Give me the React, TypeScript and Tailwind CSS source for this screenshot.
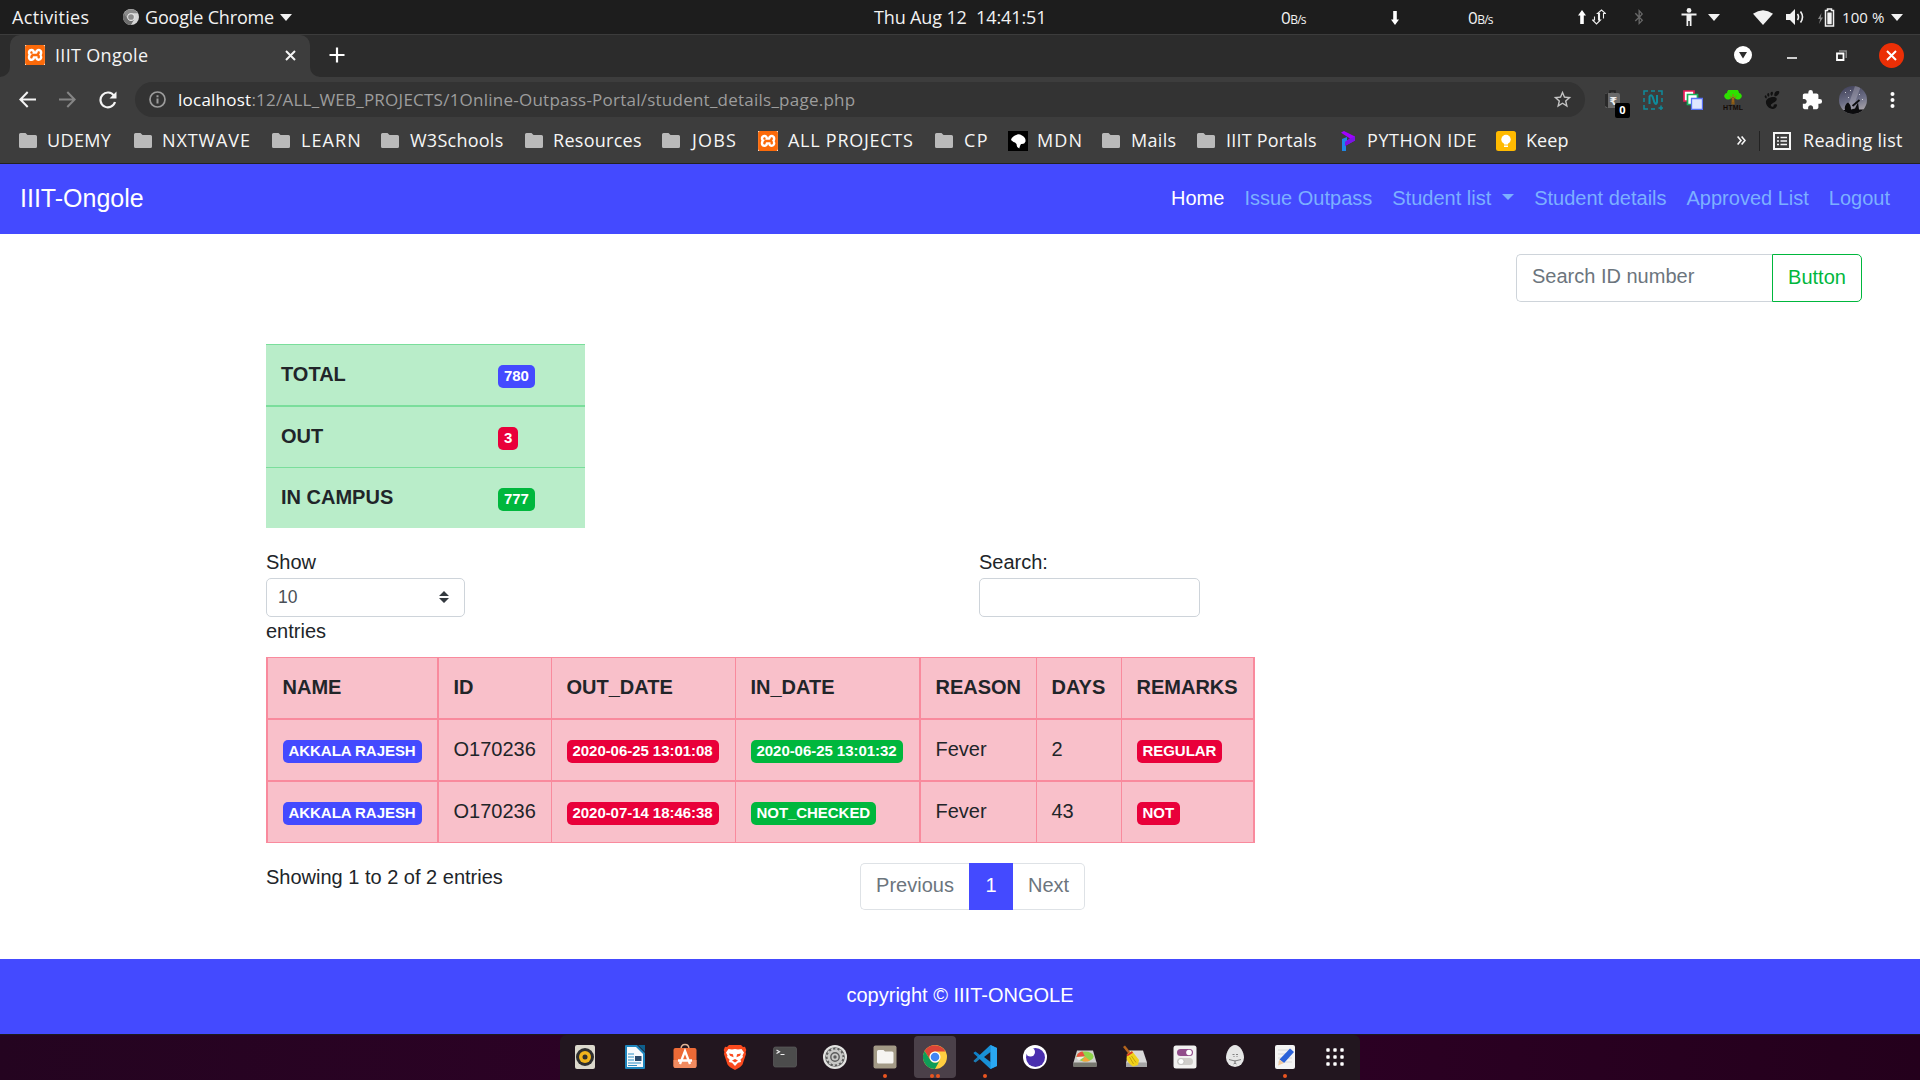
import React from "react";
import { SiGnome, SiXampp } from "react-icons/si";
import { FaBluetoothB } from "react-icons/fa";
import { MdExtension, MdStarBorder } from "react-icons/md";

const UI = "font-['Open_Sans','Noto_Sans',sans-serif]";

function Caret({ className = "" }: { className?: string }) {
  return (
    <svg className={`h-[7px] w-3 shrink-0 ${className}`} viewBox="0 0 12 7" fill="#f2f2f2">
      <path d="M0 0h12L6 7z" />
    </svg>
  );
}

function ChromeLogo({ className, mono = false }: { className: string; mono?: boolean }) {
  const [r, g, y, b, w] = mono
    ? ["#8b8b8b", "#6e6e6e", "#d6d6d6", "#8a8a8a", "#e8e8e8"]
    : ["#db4437", "#0f9d58", "#ffcd40", "#4285f4", "#fff"];
  return (
    <svg className={className} viewBox="0 0 24 24">
      <circle cx="12" cy="12" r="12" fill={y} />
      <path d="M1.6 6A12 12 0 0 1 22.4 6.5H12a5.5 5.5 0 0 0-4.8 8.2z" fill={r} />
      <path d="M1.6 6A12 12 0 0 0 12 24l4.8-8.7A5.5 5.5 0 0 1 7.2 14.7z" fill={g} />
      <circle cx="12" cy="12" r="5.5" fill={w} />
      <circle cx="12" cy="12" r="4.3" fill={b} />
    </svg>
  );
}

function Xampp({ className = "" }: { className?: string }) {
  return (
    <span className={`flex size-5 shrink-0 items-center justify-center bg-white ${className}`}>
      <SiXampp className="size-5 text-[#fb6a0a]" />
    </span>
  );
}

function BigArrow({ up = false }: { up?: boolean }) {
  return (
    <svg className={`h-[14px] w-2 shrink-0 ${up ? "rotate-180" : ""}`} viewBox="0 0 8 14" fill="#fff">
      <path d="M2.2 0h3.6v8.5H8L4 14 0 8.5h2.2z" />
    </svg>
  );
}

function Rate() {
  return (
    <span className="flex w-[110px] shrink-0 items-baseline pt-[2px] text-[#f2f2f2]">
      <span className="text-[17px] tracking-[-0.5px]">0</span>
      <span className="text-[12px] tracking-[-0.8px]">B/s</span>
    </span>
  );
}

function TopBar() {
  return (
    <div className="flex h-[34px] items-center bg-[#1d1d1d] pl-3 text-[18px] text-[#f2f2f2]">
      <span className="w-[111px] tracking-[0.33px]">Activities</span>
      <ChromeLogo mono className="mr-[6px] size-4" />
      <span className="w-[135px] tracking-[-0.17px]">Google Chrome</span>
      <Caret />
      <span className="ml-[582px] w-[102px] tracking-[-0.14px]">Thu Aug 12</span>
      <span className="w-[305px] tracking-[-0.1px]">14:41:51</span>
      <Rate />
      <div className="flex w-[77px] pt-[2px]">
        <BigArrow />
      </div>
      <Rate />
      <BigArrow up />
      <svg className="ml-[6px] h-4 w-[14px]" viewBox="0 0 14 16" fill="none" stroke="#eee" strokeWidth="1.1">
        <path d="M6.500 4.500v6.500h2L4.500 15 .5 11h2V7.500M7.500 11V4.500h-2L9.500 1l4 3.500h-2v5" />
      </svg>
      <FaBluetoothB className="ml-[25px] size-4 text-[#686868]" />
      <svg className="ml-[34px] h-[18px] w-4" viewBox="0 0 16 18" fill="#f2f2f2">
        <circle cx="8" cy="2.4" r="2.4" />
        <path d="M.5 5.5h15v2h-5V18H8.8v-5H7.2v5H5.5V7.500h-5z" />
      </svg>
      <Caret className="ml-[11px]" />
      <svg className="ml-[33px] h-[15px] w-5" viewBox="0 0 20 15" fill="#f2f2f2">
        <path d="M0 3.8Q10-3.500 20 3.800L10 15z" />
      </svg>
      <svg className="ml-[13px] h-[18px] w-[19px]" viewBox="0 0 19 18" fill="#f2f2f2">
        <path d="M0 6h4l5-5v16l-5-5H0z" />
        <path d="M11.5 6q2 3 0 6M14.5 3.5q4 5.500 0 11" fill="none" stroke="#f2f2f2" strokeWidth="1.6" />
      </svg>
      <svg className="ml-[13px] h-[19px] w-[18px]" viewBox="0 0 18 19">
        <path d="M3.500 5 0 11h2.200L1 16l4-6.500H2.800z" fill="#8a8a8a" />
        <path d="M7.500 2.500h2V1h4v1.500h2V18h-8z" fill="none" stroke="#f2f2f2" strokeWidth="1.500" />
        <path d="M9.300 4.500h4.400v11.800H9.300z" fill="#f2f2f2" />
      </svg>
      <span className="ml-[6px] w-[49px] pt-px text-[15px] whitespace-nowrap tracking-[0.1px]">100 %</span>
      <Caret />
    </div>
  );
}

function TabStrip() {
  return (
    <div className="flex h-[43px] items-center border-t border-[#3c3c3c] bg-[#2c2c2c] pr-4">
      <div className="h-full w-[10px] bg-[#3d3d3d]">
        <div className="h-full w-full rounded-br-[10px] bg-[#2c2c2c]" />
      </div>
      <div className="flex h-full w-[300px] items-center rounded-t-[10px] bg-[#3d3d3d] pb-[2px] pl-[15px]">
        <Xampp />
        <span className="ml-[10px] w-[230px] text-[18px] tracking-[0.31px] text-[#f4f4f4]">IIIT Ongole</span>
        <svg className="size-[11px]" viewBox="0 0 11 11" stroke="#f4f4f4" strokeWidth="2">
          <path d="M1 1l9 9M10 1l-9 9" />
        </svg>
      </div>
      <div className="h-full w-[10px] bg-[#3d3d3d]">
        <div className="h-full w-full rounded-bl-[10px] bg-[#2c2c2c]" />
      </div>
      <svg className="mb-[2px] ml-[9px] size-4" viewBox="0 0 16 16" stroke="#fff" strokeWidth="2.200">
        <path d="M8 .5v15M.5 8h15" />
      </svg>
      <div className="mb-[2px] ml-auto flex items-center">
        <svg className="size-[18px]" viewBox="0 0 18 18">
          <circle cx="9" cy="9" r="9" fill="#fff" />
          <path d="M5 6h8l-4 6.500z" fill="#2c2c2c" />
        </svg>
        <div className="mt-[6px] ml-[35px] h-[2px] w-[10px] bg-[#cfcfcf]" />
        <svg className="ml-[39px] size-[11px]" viewBox="0 0 11 11" fill="none">
          <path d="M3 1h7.200v7" stroke="#8c8c8c" strokeWidth="1.400" />
          <path d="M1 3.500h6.500V10H1z" stroke="#fff" strokeWidth="1.800" />
        </svg>
        <div className="ml-[32px] flex size-[25px] items-center justify-center rounded-full bg-[#eb2f06]">
          <svg className="size-[11px]" viewBox="0 0 11 11" stroke="#fff" strokeWidth="2">
            <path d="M1 1l9 9M10 1l-9 9" />
          </svg>
        </div>
      </div>
    </div>
  );
}

function Extensions() {
  return (
    <div className="ml-[18px] flex items-center">
      <div className="relative mr-[20px]">
        <svg className="size-5" viewBox="0 0 20 20">
          <path d="M7 3V1h5v2" stroke="#222" fill="none" strokeWidth="1.500" />
          <rect x="2" y="3" width="15" height="15" rx="2" fill="#6a6a6a" />
          <path d="M2 4l3-1v15l-3-2z" fill="#2a2a2a" />
          <text x="6.500" y="14.500" fontSize="11" fontWeight="700" fill="#eee" fontFamily="DejaVu Sans">₹</text>
        </svg>
        <span className="absolute top-[13px] left-3 flex h-[15px] w-[15px] items-center justify-center rounded-[2px] bg-black text-[11px] font-bold text-white">
          0
        </span>
      </div>
      <svg className="mr-[20px] size-5" viewBox="0 0 20 20" fill="none" stroke="#0f8b9b">
        <path d="M1 5V1h4M8 1h4M15 1h4v4M19 8v4M1 8v4M1 15v4h4M8 19h4M15.500 18h5M18 15.500v5" strokeWidth="1.500" />
        <path d="M6.500 14V6.500q1.500-2.500 3 0l2 6q1.500 3 2.500 0V5" strokeWidth="2" />
      </svg>
      <svg className="mr-[20px] size-5" viewBox="0 0 20 20" fill="#fff">
        <path d="M1 1h10v10H1z" stroke="#ee1c5a" strokeWidth="1.700" />
        <path d="M4.500 4.500h10v10h-10z" stroke="#16b45c" strokeWidth="1.700" />
        <path d="M8.500 8.500h11v11h-11z" fill="#dfe6ff" stroke="#5872f5" strokeWidth="1.300" />
      </svg>
      <svg className="mr-[20px] size-5" viewBox="0 0 20 20">
        <path d="M8.800 8h2.400l.5 6.500H8.300z" fill="#8a5a14" />
        <path d="M2 8a3 3 0 0 1 2-5 6 5 0 0 1 12 0 3 3 0 0 1 2 5q-2 2.500-5 1l-3-2-3 2q-3 1.500-5-1z" fill="#2de000" />
        <path d="M10 12V4M10 9 6.500 6M10 9l3.500-3" stroke="#a86a1a" strokeWidth="1" />
        <text x="0" y="19.500" fontSize="7" fontWeight="700" textLength="20" fill="#140b06" fontFamily="Liberation Sans">HTML</text>
      </svg>
      <SiGnome className="mr-[20px] size-[18px] text-[#111]" />
      <MdExtension className="mr-[16px] size-[22px] text-white" />
      <svg className="mr-[23px] size-7" viewBox="0 0 28 28">
        <defs>
          <linearGradient id="sky" x1="0" y1="0" x2=".3" y2="1">
            <stop offset="0" stopColor="#3c3c54" />
            <stop offset=".6" stopColor="#6c6e86" />
            <stop offset="1" stopColor="#a5a1a8" />
          </linearGradient>
          <clipPath id="face">
            <circle cx="14" cy="14" r="14" />
          </clipPath>
        </defs>
        <g clipPath="url(#face)">
          <path d="M0 0h28v28H0z" fill="url(#sky)" />
          <path d="M16 0l6 0L14 22l-5-2z" fill="#c4c0cc" opacity=".35" />
          <path d="M0 24h6q-1-5 3-7.500 3 2 3 7l4-1 3-6 1 7h8v6H0z" fill="#0b0b0d" />
          <path d="M13.500 20l7-6" stroke="#0b0b0d" strokeWidth="1.800" />
          <path d="M6 6h1v1H6zM11 4h1v1h-1zM20 8h1v1h-1zM9 11h1v1H9zM23 13h1v1h-1z" fill="#fff" opacity=".7" />
        </g>
      </svg>
      <svg className="h-4 w-[5px]" viewBox="0 0 5 16" fill="#fff">
        <circle cx="2.500" cy="2" r="2" />
        <circle cx="2.500" cy="8" r="2" />
        <circle cx="2.500" cy="14" r="2" />
      </svg>
    </div>
  );
}

function AddressRow() {
  return (
    <div className="flex h-[45px] items-center bg-[#3d3d3d] pl-[19px]">
      <svg className="size-[17px]" viewBox="0 0 17 17" fill="none" stroke="#f4f4f4" strokeWidth="2">
        <path d="M17 8.500H2M8.700 1 1.400 8.500 8.700 16" />
      </svg>
      <svg className="ml-[23px] size-[17px]" viewBox="0 0 17 17" fill="none" stroke="#858585" strokeWidth="2">
        <path d="M0 8.500h15M8.300 1l7.300 7.500L8.300 16" />
      </svg>
      <svg className="ml-[23px] size-[18px]" viewBox="0 0 18 18" fill="none" stroke="#f4f4f4" strokeWidth="2.200">
        <path d="M15 4.700A7.400 7.400 0 1 0 16 11" />
        <path d="M17.500.5v7H10.500z" fill="#f4f4f4" stroke="none" />
      </svg>
      <div className="ml-[18px] flex h-[35px] w-[1450px] items-center rounded-full bg-[#333] pr-[12px] pl-[14px]">
        <svg className="size-[17px]" viewBox="0 0 17 17" fill="none" stroke="#9c9c9c" strokeWidth="1.700">
          <circle cx="8.500" cy="8.500" r="7.500" />
          <path d="M8.500 7.500v5M8.500 4.300v1.900" strokeWidth="2" />
        </svg>
        <span className="ml-3 text-[17px] tracking-[0.24px] text-[#9d9d9d]">
          <span className="text-white">localhost</span>
          :12/ALL_WEB_PROJECTS/1Online-Outpass-Portal/student_details_page.php
        </span>
        <MdStarBorder className="ml-auto size-[21px] text-[#c4c4c4]" />
      </div>
      <Extensions />
    </div>
  );
}

function Folder() {
  return (
    <svg className="h-[15px] w-[18px]" viewBox="0 0 18 15" fill="#bababa">
      <path d="M0 1.500Q0 0 1.500 0h5l2 2H16.500Q18 2 18 3.500v10Q18 15 16.500 15h-15Q0 15 0 13.500z" />
    </svg>
  );
}

function MdnIcon() {
  return (
    <svg className="size-5" viewBox="0 0 20 20">
      <path d="M0 0h20v20H0z" fill="#000" />
      <path d="M3 9q0-2 3-4 4-3 8-.5 4 2 3.500 6-1 3-4.500 2.500-2 3.500-1.500 4.500-3-1-3-4.500Q7 11 5.500 11z" fill="#fff" />
    </svg>
  );
}

function PyIcon() {
  return (
    <svg className="h-5 w-[14px]" viewBox="0 0 14 20">
      <path d="M1 8l5-2v5l-1 1v8H1z" fill="#1e88e5" />
      <path d="M0 1.500 3 0l11 5.500v4L4 15v-4l5-3.500L2 3z" fill="#a100ff" />
      <path d="M9 7.500l5-2v4L4 15v-4z" fill="#7a14e8" />
    </svg>
  );
}

function KeepIcon() {
  return (
    <svg className="size-5" viewBox="0 0 20 20">
      <rect width="20" height="20" rx="2.500" fill="#ffba00" />
      <circle cx="10" cy="8.500" r="4.700" fill="#fff" />
      <path d="M8 12h4v1.500H8zM8 14.500h4V16H8z" fill="#fff" />
    </svg>
  );
}

const BOOKMARKS: { label: string; item: string; text: string; icon?: React.ReactNode }[] = [
  { label: "UDEMY", item: "w-[115px]", text: "ml-[10px] tracking-[0.35px]" },
  { label: "NXTWAVE", item: "w-[138px]", text: "ml-[10px] tracking-[0.9px]" },
  { label: "LEARN", item: "w-[109px]", text: "ml-[11px] tracking-[1.1px]" },
  { label: "W3Schools", item: "w-[144px]", text: "ml-[11px] tracking-[0.25px]" },
  { label: "Resources", item: "w-[137px]", text: "ml-[10px] tracking-[0.28px]" },
  { label: "JOBS", item: "w-[96px]", text: "ml-[12px] tracking-[1.18px]" },
  { label: "ALL PROJECTS", item: "w-[177px]", text: "ml-[10px] tracking-[0.74px]", icon: <Xampp /> },
  { label: "CP", item: "w-[73px]", text: "ml-[11px] tracking-[1.5px]" },
  { label: "MDN", item: "w-[94px]", text: "ml-[9px] tracking-[1.13px]", icon: <MdnIcon /> },
  { label: "Mails", item: "w-[95px]", text: "ml-[11px] tracking-[0.31px]" },
  { label: "IIIT Portals", item: "w-[144px]", text: "ml-[11px] tracking-[0.21px]" },
  { label: "PYTHON IDE", item: "w-[155px]", text: "ml-3 tracking-[0.57px]", icon: <PyIcon /> },
  { label: "Keep", item: "w-[241px]", text: "ml-[10px] tracking-[0.09px]", icon: <KeepIcon /> },
];

function BookmarksBar() {
  return (
    <div className="flex h-[42px] items-center border-b border-[#222] bg-[#3d3d3d] pb-1 pl-[19px] text-[18px] text-[#f6f6f6]">
      {BOOKMARKS.map((b) => (
        <div key={b.label} className={`flex shrink-0 items-center whitespace-nowrap ${b.item}`}>
          {b.icon ?? <Folder />}
          <span className={b.text}>{b.label}</span>
        </div>
      ))}
      <svg className="h-[9px] w-[9px]" viewBox="0 0 9 9" fill="none" stroke="#f6f6f6" strokeWidth="1.600">
        <path d="M.6.5 4 4.500.6 8.500M4.600.5 8 4.500 4.600 8.500" />
      </svg>
      <div className="ml-[13px] h-5 w-px bg-[#222]" />
      <svg className="ml-[13px] size-[18px]" viewBox="0 0 18 18" fill="none" stroke="#f6f6f6">
        <path d="M1 1h16v16H1z" strokeWidth="2" />
        <path d="M4 5.500h2M7.500 5.500H14M4 9h2M7.500 9H14M4 12.500h2M7.500 12.500H14" strokeWidth="1.700" />
      </svg>
      <span className="ml-3 whitespace-nowrap tracking-[0.28px]">Reading list</span>
    </div>
  );
}

function Navbar() {
  return (
    <nav className="flex h-[70px] items-center bg-[#444aff] px-5 text-[20px] text-[#7cb0ff]">
      <span className="text-[25px] text-white">IIIT-Ongole</span>
      <div className="ml-auto flex items-center gap-5 pr-[10px] pb-[2px]">
        <span className="text-white">Home</span>
        <span>Issue Outpass</span>
        <span className="flex items-center">
          Student list
          <svg className="ml-[11px] h-[6px] w-3 -translate-y-px" viewBox="0 0 12 6" fill="#7cb0ff">
            <path d="M0 0h12L6 6z" />
          </svg>
        </span>
        <span>Student details</span>
        <span>Approved List</span>
        <span>Logout</span>
      </div>
    </nav>
  );
}

const TONES = { blue: "bg-[#444aff]", red: "bg-[#e9003a]", green: "bg-[#00b73d]" };

function Badge({ tone, children }: { tone: keyof typeof TONES; children: React.ReactNode }) {
  return (
    <span
      className={`inline-block rounded-[5px] px-[6px] pt-[2.75px] pb-[4.75px] align-baseline text-[15px] leading-none font-bold tracking-[-0.05px] whitespace-nowrap text-white ${TONES[tone]}`}
    >
      {children}
    </span>
  );
}

function Totals() {
  const rows: [string, string, keyof typeof TONES, string][] = [
    ["TOTAL", "780", "blue", "border-t"],
    ["OUT", "3", "red", "border-t-2"],
    ["IN CAMPUS", "777", "green", "border-t"],
  ];
  return (
    <div className="w-[319px] bg-[#b9edc9] font-bold">
      {rows.map(([label, value, tone, border]) => (
        <div key={label} className={`grid grid-cols-[217px_1fr] border-[#7ade9b] ${border}`}>
          <div className="h-[60px] px-[15px] pt-[14px]">{label}</div>
          <div className="h-[60px] px-[15px] pt-[14px]">
            <Badge tone={tone}>{value}</Badge>
          </div>
        </div>
      ))}
    </div>
  );
}

const CELL_BORDERS = ["border-r-2", "border-r", "border-r", "border-r-2", "border-r", "border-r", "border-r-2"];

function Row({ cells, className }: { cells: React.ReactNode[]; className: string }) {
  return (
    <div className={`grid grid-cols-[171px_113px_184px_185px_116px_85px_133px] border-[#f98a9d] ${className}`}>
      {cells.map((c, i) => (
        <div key={i} className={`h-[60px] border-[#f98a9d] px-[14.5px] pt-[14px] whitespace-nowrap ${CELL_BORDERS[i]}`}>
          {c}
        </div>
      ))}
    </div>
  );
}

function Records() {
  return (
    <div className="w-[989px] border-t border-b border-l-2 border-[#f98a9d] bg-[#f9c0ca]">
      <Row className="font-bold" cells={["NAME", "ID", "OUT_DATE", "IN_DATE", "REASON", "DAYS", "REMARKS"]} />
      <Row
        className="border-t-2"
        cells={[
          <Badge tone="blue">AKKALA RAJESH</Badge>,
          "O170236",
          <Badge tone="red">2020-06-25 13:01:08</Badge>,
          <Badge tone="green">2020-06-25 13:01:32</Badge>,
          "Fever",
          "2",
          <Badge tone="red">REGULAR</Badge>,
        ]}
      />
      <Row
        className="border-t-2"
        cells={[
          <Badge tone="blue">AKKALA RAJESH</Badge>,
          "O170236",
          <Badge tone="red">2020-07-14 18:46:38</Badge>,
          <Badge tone="green">NOT_CHECKED</Badge>,
          "Fever",
          "43",
          <Badge tone="red">NOT</Badge>,
        ]}
      />
    </div>
  );
}

function Page() {
  return (
    <main className="h-[725px] bg-white text-[20px] leading-[30px] text-[#212529]">
      <div className="flex h-[110px] justify-end pt-5 pr-[58px]">
        <div className="flex h-12 w-[256px] items-center rounded-l-[5px] border border-r-0 border-[#ced4da] pb-1 pl-[15px] text-[#6c757d]">
          Search ID number
        </div>
        <div className="flex h-12 w-[90px] items-center justify-center rounded-r-[5px] border border-[#00b73d] pb-[2px] text-[#00b73d]">
          Button
        </div>
      </div>
      <div className="ml-[266px] w-[989px]">
        <Totals />
        <div className="flex pt-[19px]">
          <div className="w-[713px]">
            <div className="h-[31px]">Show</div>
            <div className="flex h-[39px] w-[199px] items-center justify-between rounded-[5px] border border-[#ced4da] pr-[15px] pb-px pl-[11px] text-[17.5px] text-[#495057]">
              10
              <svg className="h-[12px] w-[10px]" viewBox="0 0 10 12" fill="#343a40">
                <path d="M5 0l5 5H0zM5 12l5-5H0z" />
              </svg>
            </div>
            <div className="-mt-px">entries</div>
          </div>
          <div>
            <div className="h-[31px]">Search:</div>
            <div className="h-[39px] w-[221px] rounded-[5px] border border-[#ced4da]" />
          </div>
        </div>
        <div className="pt-[11px]">
          <Records />
        </div>
        <div className="flex pt-[19px]">
          <div className="w-[594px]">Showing 1 to 2 of 2 entries</div>
          <div className="mt-px flex h-[47px] text-[#6c757d]">
            <div className="flex w-[109px] items-center justify-center rounded-l-[5px] border border-r-0 border-[#dee2e6] pb-[3px]">
              Previous
            </div>
            <div className="flex w-11 items-center justify-center bg-[#444aff] pb-[3px] text-white">1</div>
            <div className="flex w-[72px] items-center justify-center rounded-r-[5px] border border-l-0 border-[#dee2e6] pb-[3px]">
              Next
            </div>
          </div>
        </div>
      </div>
    </main>
  );
}

const DOCK: { name: string; dots: number; art: React.ReactNode }[] = [
  {
    name: "rhythmbox",
    dots: 0,
    art: (
      <>
        <rect x="2" width="20" height="24" rx="2" fill="#dcd8cc" />
        <circle cx="12" cy="12" r="9" fill="#2e2e2e" />
        <circle cx="12" cy="12" r="6" fill="#f0b31c" />
        <circle cx="12" cy="12" r="2.500" fill="#2e2e2e" />
      </>
    ),
  },
  {
    name: "writer",
    dots: 0,
    art: (
      <>
        <path d="M3 0h11l8 8v15q0 1-1 1H3q-1 0-1-1V1q0-1 1-1z" fill="#1f86bd" />
        <path d="M4 2h9l7 7v13H4z" fill="#f7fafc" />
        <path d="M15 0h7v7z" fill="#0f5f8c" />
        <path d="M5 9h6M5 12h6M5 15h6M5 18h13M5 20.500h9" stroke="#2b8dc4" strokeWidth="1.200" />
        <path d="M12 11h6.500v5H12z" fill="#27496b" />
      </>
    ),
  },
  {
    name: "software",
    dots: 0,
    art: (
      <>
        <path d="M8 4q0-4.500 4-4.500T16 4" fill="none" stroke="#e0b497" strokeWidth="1.400" />
        <rect x=".5" y="3" width="23" height="20" rx="2" fill="#ee6a36" />
        <path d="M.5 15h23v6q0 2-2 2h-19q-2 0-2-2z" fill="#f28b60" />
        <path d="M7 19l5-13 5 13M5 15.500h14" fill="none" stroke="#fff" strokeWidth="2.300" />
      </>
    ),
  },
  {
    name: "brave",
    dots: 0,
    art: (
      <>
        <path d="M6 0h12l2 2 2-.3L23.300 5l-.7 2 .4 2-3.500 10.500Q18 22 12 25q-6-3-7.500-5.500L1 9l.4-2-.7-2L2 1.700 4 2z" fill="#fb4a1e" />
        <path
          d="M12 4l3 .5L18.500 4 21 7.500l-1.500 3 .5 1.500-2.500 2.500L18 17l-3 .8L12 21l-3-3.200L6 17l.5-2.500L4 12l.5-1.500L3 7.500 5.500 4 9 4.500z"
          fill="#fff"
        />
        <path d="M6 8.500l4 .8.500 3-3.500-1.500zM18 8.500l-4 .8-.5 3 3.500-1.500zM9 15.500l3-1.500 3 1.500-3 2z" fill="#fb4a1e" />
      </>
    ),
  },
  {
    name: "terminal",
    dots: 0,
    art: (
      <>
        <rect x=".5" y="2" width="23" height="20" rx="2" fill="#4c4c4c" stroke="#5d5d5d" strokeWidth=".7" />
        <path d="M3.500 5l3 1.800-3 1.800M7.500 9.500h4" fill="none" stroke="#eee" strokeWidth="1.200" />
      </>
    ),
  },
  {
    name: "settings",
    dots: 0,
    art: (
      <>
        <circle cx="12" cy="12" r="12" fill="#e3e3e1" />
        <circle cx="12" cy="12" r="9.800" fill="#5c5c5c" />
        <circle cx="12" cy="12" r="6.200" fill="none" stroke="#c9c9c7" strokeWidth="2.600" />
        <circle cx="12" cy="12" r="8.200" fill="none" stroke="#c9c9c7" strokeWidth="1.800" strokeDasharray="2.150 2.150" />
        <circle cx="12" cy="12" r="2.600" fill="none" stroke="#c9c9c7" strokeWidth="1.800" />
      </>
    ),
  },
  {
    name: "files",
    dots: 1,
    art: (
      <>
        <rect x=".5" y=".5" width="23" height="23" rx="2" fill="#a39a86" />
        <path d="M4 6.500Q4 5 5.500 5h5l1.500 1.500h7q1.500 0 1.500 1.500v9q0 1.500-1.500 1.500H5.500Q4 18.500 4 17z" fill="#f6f4f1" />
      </>
    ),
  },
  { name: "chrome", dots: 2, art: null },
  {
    name: "code",
    dots: 1,
    art: (
      <>
        <path d="M17.500 0L7 10 2.500 6.500 .7 7.500v1L17.500 24 24 21V3z" fill="#0f7fc6" />
        <path d="M17.500 0L.7 15.500v1l1.800 1L7 14l10.500 10z" fill="#1b95da" opacity=".8" />
        <path d="M17.500 7v10L11 12zM.7 9.300 3.500 12 .7 14.700z" fill="#22161f" />
        <path d="M17.500 0 24 3v18l-6.500 3z" fill="#2aa7f2" />
      </>
    ),
  },
  {
    name: "eclipse",
    dots: 0,
    art: (
      <>
        <circle cx="12" cy="12" r="12" fill="#fff" />
        <circle cx="12.500" cy="12.500" r="9.500" fill="#4a2fae" />
        <circle cx="7.500" cy="7" r="4.500" fill="#fff" />
      </>
    ),
  },
  {
    name: "disk-usage",
    dots: 0,
    art: (
      <>
        <path d="M4 5.500h16l3.500 12v4H.5v-4z" fill="#cfcfcd" />
        <path d="M.5 17.500h23v4.500H.5z" fill="#77776f" />
        <ellipse cx="12" cy="11.500" rx="8.500" ry="5" fill="#8fd44a" />
        <path d="M12 11.500 3.500 12q1-5 6-5.500z" fill="#e9503f" />
        <path d="M12 11.500 6 15.500Q3.500 14 3.500 12z" fill="#f0f0ea" />
        <path d="M12 11.500l5 4.200q-4 1.600-8 .4z" fill="#f5a13a" />
      </>
    ),
  },
  {
    name: "cleaner",
    dots: 0,
    art: (
      <>
        <path d="M6 5.500h14l4 12v4.500H3v-4z" fill="#d9d9d9" />
        <path d="M3 17.500h21V22H3z" fill="#a5a5a5" />
        <path d="M0 2l2-1.500L8 8l-2 1.500z" fill="#b5651d" />
        <path d="M4 9l5-3 7 9-1 5-5 1.500Q5 18 3.500 14z" fill="#f1d21c" />
        <path d="M4 10.500l5.500-3.500" stroke="#d8342a" strokeWidth="2" />
        <path d="M6.500 12l4 7M8.500 11l4.500 6.500" stroke="#b89608" strokeWidth=".8" />
      </>
    ),
  },
  {
    name: "tweaks",
    dots: 0,
    art: (
      <>
        <rect x=".5" y=".5" width="23" height="23" rx="2.500" fill="#f2f1f0" />
        <rect x="4" y="4" width="16" height="7" rx="3.500" fill="#924d8b" />
        <circle cx="16" cy="7.500" r="2.800" fill="#fff" />
        <rect x="4" y="13" width="16" height="7" rx="3.500" fill="#cfcdca" />
        <circle cx="8" cy="16.500" r="3" fill="#fff" stroke="#b5b3b0" strokeWidth=".7" />
      </>
    ),
  },
  {
    name: "egg",
    dots: 0,
    art: (
      <>
        <path d="M12 0c5 0 9 7 9 12.500a9 9.500 0 0 1-18 0C3 7 7 0 12 0z" fill="#e6e6e6" />
        <path d="M9.500 9.500h2M13 9.500h2M10.500 11.500h1M13.500 11.500h1M6 14.500q6 3 12 0M12 15.500v3M10.500 19l1.500-1 1.500 1" fill="none" stroke="#666" strokeWidth=".8" />
      </>
    ),
  },
  {
    name: "editor",
    dots: 1,
    art: (
      <>
        <rect x="2" width="20" height="24" rx="2" fill="#f4f4f4" />
        <path d="M5 5h14M5 9h14M5 13h14M5 17h14" stroke="#d8d8d8" />
        <path d="M17 3.500l4 3.500-10 11-4.500-3.500z" fill="#2b62d9" />
        <path d="M6.500 14.500L11 18l-6 2.500z" fill="#efc9a0" />
      </>
    ),
  },
  {
    name: "apps",
    dots: 0,
    art: (
      <g fill="#fff">
        {[5, 12, 19].flatMap((y) =>
          [5, 12, 19].map((x) => <rect key={`${x}-${y}`} x={x - 1.7} y={y - 1.7} width="3.400" height="3.400" rx=".8" />),
        )}
      </g>
    ),
  },
];

function Dock() {
  return (
    <div className="flex h-[46px] justify-center border-t border-[#1b1b1d] bg-gradient-to-r from-[#240420] via-[#300028] to-[#24001c]">
      <div className="flex h-[45px] w-[800px] rounded-t-[6px] bg-[#22161f]">
        {DOCK.map((d) => (
          <div key={d.name} className="flex w-[50px] shrink-0 justify-center pt-px">
            <div
              className={`flex h-[42px] w-[42px] flex-col items-center rounded-[4px] pt-[9px] ${d.dots === 2 ? "bg-[#4b4049]" : ""}`}
            >
              {d.name === "chrome" ? (
                <ChromeLogo className="size-6" />
              ) : (
                <svg className="size-6 overflow-visible" viewBox="0 0 24 24">
                  {d.art}
                </svg>
              )}
              <div className="mt-[5px] flex gap-[2px]">
                {Array.from({ length: d.dots }, (_, i) => (
                  <span key={i} className="size-1 rounded-full bg-[#e95420]" />
                ))}
              </div>
            </div>
          </div>
        ))}
      </div>
    </div>
  );
}

export default function App() {
  return (
    <div className="flex h-[1080px] w-[1920px] flex-col overflow-hidden font-['Liberation_Sans',Arial,sans-serif]">
      <header className={UI}>
        <TopBar />
        <TabStrip />
        <AddressRow />
        <BookmarksBar />
      </header>
      <Navbar />
      <Page />
      <footer className="flex h-[75px] items-center justify-center bg-[#444aff] pb-1 text-[20px] text-white">
        copyright © IIIT-ONGOLE
      </footer>
      <Dock />
    </div>
  );
}
